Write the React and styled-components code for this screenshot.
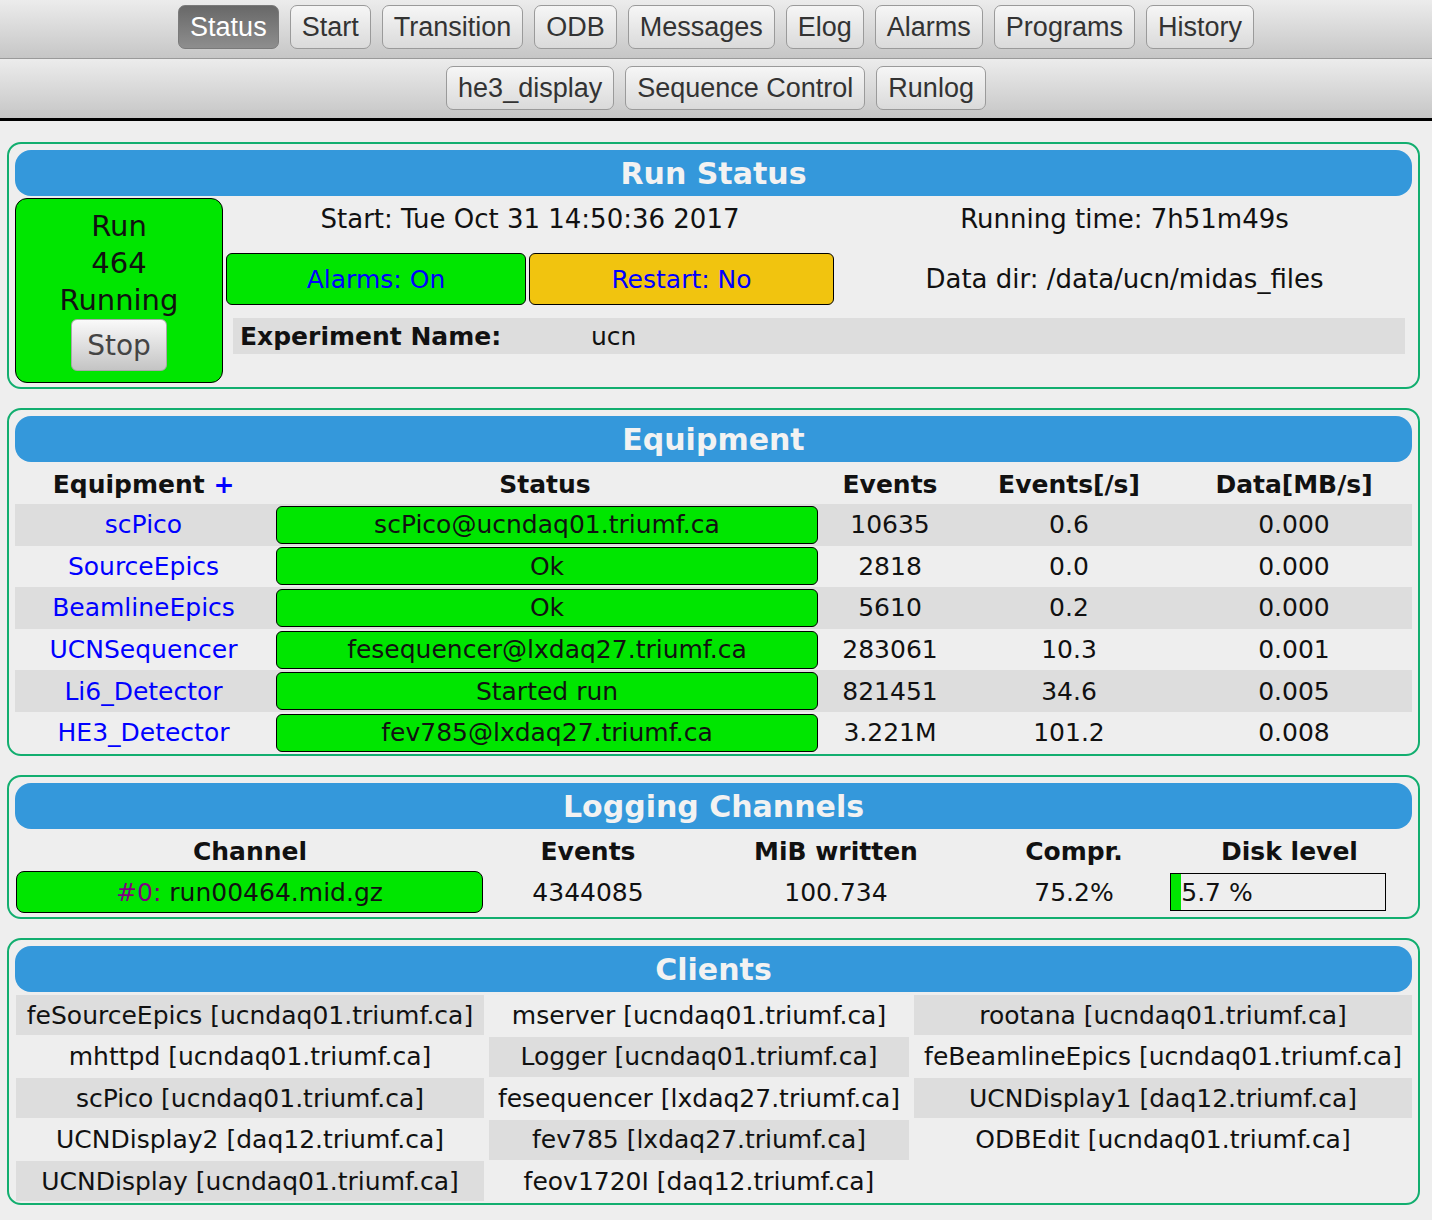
import React from 'react';
import styled, { createGlobalStyle } from 'styled-components';

const GREEN = '#00e600';
const SHADE = '#dddddd';

const GlobalStyle = createGlobalStyle`
  html, body {
    margin: 0;
    padding: 0;
    background: #eeeeee;
  }
  body {
    font-family: 'DejaVu Sans', Verdana, sans-serif;
    font-size: 25px;
    color: #111;
  }
`;

const NavBar = styled.div`
  border-bottom: 3px solid #000;
`;

const NavRow = styled.div`
  display: flex;
  justify-content: center;
  gap: 11px;
  height: 59px;
  padding-top: ${(p) => (p.$second ? '7px' : '5px')};
  box-sizing: border-box;
  background: linear-gradient(#ececec, #c6c6c6);
  border-bottom: ${(p) => (p.$second ? 'none' : '1px solid #9a9a9a')};
`;

const NavButton = styled.div`
  height: 44px;
  box-sizing: border-box;
  padding: 0 11px;
  display: flex;
  align-items: center;
  font-family: 'Liberation Sans', Arial, sans-serif;
  font-size: 27px;
  border: 1px solid ${(p) => (p.$active ? '#7a7a7a' : '#9a9a9a')};
  border-radius: 7px;
  color: ${(p) => (p.$active ? '#fff' : '#333')};
  background: ${(p) =>
    p.$active
      ? 'linear-gradient(#686868, #8e8e8e)'
      : 'linear-gradient(#f6f6f6, #dadada)'};
`;

const Page = styled.div`
  padding: 21px 12px 10px 7px;
`;

const Panel = styled.div`
  border: 2px solid #12ae6f;
  border-radius: 14px;
  padding: 6px 6px ${(p) => p.$pb ?? 4}px 6px;
  margin-bottom: 19px;
`;

const PanelHeader = styled.div`
  height: 46px;
  border-radius: 16px;
  background: #3498db;
  color: #f2f2f2;
  font-weight: bold;
  font-size: 30px;
  display: flex;
  align-items: center;
  justify-content: center;
`;

/* run status */

const RunLayout = styled.div`
  display: flex;
  gap: 3px;
  margin-top: 2px;
`;

const RunBox = styled.div`
  width: 208px;
  height: 185px;
  box-sizing: border-box;
  flex-shrink: 0;
  background: ${GREEN};
  border: 1px solid #000;
  border-radius: 12px;
  padding-top: 9px;
  display: flex;
  flex-direction: column;
  align-items: center;
  font-size: 29px;
  line-height: 37px;
`;

const StopButton = styled.div`
  width: 96px;
  height: 52px;
  box-sizing: border-box;
  border: 1px solid #a8a8a8;
  border-radius: 6px;
  background: linear-gradient(#fafafa, #c4c4c4);
  color: #444;
  font-size: 28px;
  display: flex;
  align-items: center;
  justify-content: center;
`;

const RunGrid = styled.div`
  flex: 1;
  display: grid;
  grid-template-columns: 300px 305px 1fr;
  grid-template-rows: 42px 52px 36px;
  column-gap: 3px;
  row-gap: 13px;
  font-size: 26px;
`;

const InfoCell = styled.div`
  grid-column: span ${(p) => p.$span || 1};
  display: flex;
  align-items: center;
  justify-content: center;
`;

const FlagBox = styled.div`
  background: ${(p) => p.$color};
  border: 1px solid #000;
  border-radius: 6px;
  color: #0000ff;
  font-size: 25px;
  display: flex;
  align-items: center;
  justify-content: center;
`;

const ExpRow = styled.div`
  grid-column: span 3;
  margin: 0 7px;
  background: ${SHADE};
  display: grid;
  grid-template-columns: 351px 1fr;
  align-items: center;
  padding-left: 7px;
  font-size: 25px;
`;

const Bold = styled.span`
  font-weight: bold;
`;

/* equipment */

const EQ_COLS = '257px 546px 144px 214px 1fr';

const EqRow = styled.div`
  display: grid;
  grid-template-columns: ${EQ_COLS};
  height: ${(p) => (p.$head ? '42px' : '41.6px')};
  padding-top: ${(p) => (p.$head ? '2px' : '0')};
  box-sizing: border-box;
  align-items: center;
  text-align: center;
  background: ${(p) => (p.$shade ? SHADE : 'transparent')};
  font-weight: ${(p) => (p.$head ? 'bold' : 'normal')};
`;

const EqLink = styled.span`
  color: #0000ff;
`;

const StatusBox = styled.div`
  margin-left: 4px;
  height: 38px;
  background: ${GREEN};
  border: 1px solid #000;
  border-radius: 6px;
  box-sizing: border-box;
  display: flex;
  align-items: center;
  justify-content: center;
`;

/* logging */

const LogRow = styled.div`
  display: grid;
  grid-template-columns: 470px 206px 290px 186px 1fr;
  height: 42px;
  padding-top: ${(p) => (p.$head ? '2px' : '0')};
  box-sizing: border-box;
  align-items: center;
  text-align: center;
  font-weight: ${(p) => (p.$head ? 'bold' : 'normal')};
`;

const ChannelBox = styled.div`
  height: 42px;
  margin-left: 1px;
  margin-right: 2px;
  box-sizing: border-box;
  background: ${GREEN};
  border: 1px solid #000;
  border-radius: 8px;
  display: flex;
  align-items: center;
  justify-content: center;
`;

const Purple = styled.span`
  color: #800080;
`;

const DiskBar = styled.div`
  width: 216px;
  height: 38px;
  margin-left: 3px;
  box-sizing: border-box;
  border: 1px solid #000;
  display: flex;
  align-items: stretch;
  text-align: left;
`;

const DiskFill = styled.div`
  background: ${GREEN};
  flex-shrink: 0;
`;

const DiskText = styled.span`
  display: flex;
  align-items: center;
`;

/* clients */

const ClientGrid = styled.div`
  display: grid;
  grid-template-columns: 468px 420px 1fr;
  grid-auto-rows: 40px;
  column-gap: 5px;
  row-gap: 1.5px;
  margin: 3px 0 0 1px;
`;

const ClientCell = styled.div`
  background: ${(p) => (p.$shade ? SHADE : 'transparent')};
  display: flex;
  align-items: center;
  justify-content: center;
  white-space: nowrap;
`;

const navTop = ['Status', 'Start', 'Transition', 'ODB', 'Messages', 'Elog', 'Alarms', 'Programs', 'History'];
const navBottom = ['he3_display', 'Sequence Control', 'Runlog'];

const equipment = [
  { name: 'scPico', status: 'scPico@ucndaq01.triumf.ca', events: '10635', rate: '0.6', data: '0.000' },
  { name: 'SourceEpics', status: 'Ok', events: '2818', rate: '0.0', data: '0.000' },
  { name: 'BeamlineEpics', status: 'Ok', events: '5610', rate: '0.2', data: '0.000' },
  { name: 'UCNSequencer', status: 'fesequencer@lxdaq27.triumf.ca', events: '283061', rate: '10.3', data: '0.001' },
  { name: 'Li6_Detector', status: 'Started run', events: '821451', rate: '34.6', data: '0.005' },
  { name: 'HE3_Detector', status: 'fev785@lxdaq27.triumf.ca', events: '3.221M', rate: '101.2', data: '0.008' },
];

const clients = [
  'feSourceEpics [ucndaq01.triumf.ca]',
  'mserver [ucndaq01.triumf.ca]',
  'rootana [ucndaq01.triumf.ca]',
  'mhttpd [ucndaq01.triumf.ca]',
  'Logger [ucndaq01.triumf.ca]',
  'feBeamlineEpics [ucndaq01.triumf.ca]',
  'scPico [ucndaq01.triumf.ca]',
  'fesequencer [lxdaq27.triumf.ca]',
  'UCNDisplay1 [daq12.triumf.ca]',
  'UCNDisplay2 [daq12.triumf.ca]',
  'fev785 [lxdaq27.triumf.ca]',
  'ODBEdit [ucndaq01.triumf.ca]',
  'UCNDisplay [ucndaq01.triumf.ca]',
  'feov1720I [daq12.triumf.ca]',
];

const diskLevel = 5.7;

export default function App() {
  return (
    <>
      <GlobalStyle />
      <NavBar>
        <NavRow>
          {navTop.map((n) => (
            <NavButton key={n} $active={n === 'Status'}>
              {n}
            </NavButton>
          ))}
        </NavRow>
        <NavRow $second>
          {navBottom.map((n) => (
            <NavButton key={n}>{n}</NavButton>
          ))}
        </NavRow>
      </NavBar>

      <Page>
        <Panel>
          <PanelHeader>Run Status</PanelHeader>
          <RunLayout>
            <RunBox>
              <div>Run</div>
              <div>464</div>
              <div>Running</div>
              <StopButton>Stop</StopButton>
            </RunBox>
            <RunGrid>
              <InfoCell $span={2}>Start: Tue Oct 31 14:50:36 2017</InfoCell>
              <InfoCell>Running time: 7h51m49s</InfoCell>
              <FlagBox $color={GREEN}>Alarms: On</FlagBox>
              <FlagBox $color="#f1c40f">Restart: No</FlagBox>
              <InfoCell>Data dir: /data/ucn/midas_files</InfoCell>
              <ExpRow>
                <Bold>Experiment Name:</Bold>
                <span>ucn</span>
              </ExpRow>
            </RunGrid>
          </RunLayout>
        </Panel>

        <Panel $pb={0.5}>
          <PanelHeader>Equipment</PanelHeader>
          <EqRow $head>
            <div>
              Equipment <EqLink>+</EqLink>
            </div>
            <div>Status</div>
            <div>Events</div>
            <div>Events[/s]</div>
            <div>Data[MB/s]</div>
          </EqRow>
          {equipment.map((e, i) => (
            <EqRow key={e.name} $shade={i % 2 === 0}>
              <EqLink>{e.name}</EqLink>
              <StatusBox>{e.status}</StatusBox>
              <div>{e.events}</div>
              <div>{e.rate}</div>
              <div>{e.data}</div>
            </EqRow>
          ))}
        </Panel>

        <Panel $pb={4}>
          <PanelHeader>Logging Channels</PanelHeader>
          <LogRow $head>
            <div>Channel</div>
            <div>Events</div>
            <div>MiB written</div>
            <div>Compr.</div>
            <div>Disk level</div>
          </LogRow>
          <LogRow>
            <ChannelBox>
              <Purple>#0:</Purple>&nbsp;run00464.mid.gz
            </ChannelBox>
            <div>4344085</div>
            <div>100.734</div>
            <div>75.2%</div>
            <DiskBar>
              <DiskFill style={{ width: `${diskLevel * 1.8}px` }} />
              <DiskText>{diskLevel} %</DiskText>
            </DiskBar>
          </LogRow>
        </Panel>

        <Panel $pb={2}>
          <PanelHeader>Clients</PanelHeader>
          <ClientGrid>
            {clients.map((c, i) => {
              const row = Math.floor(i / 3);
              const col = i % 3;
              return (
                <ClientCell key={c} $shade={(row + col) % 2 === 0}>
                  {c}
                </ClientCell>
              );
            })}
          </ClientGrid>
        </Panel>
      </Page>
    </>
  );
}
